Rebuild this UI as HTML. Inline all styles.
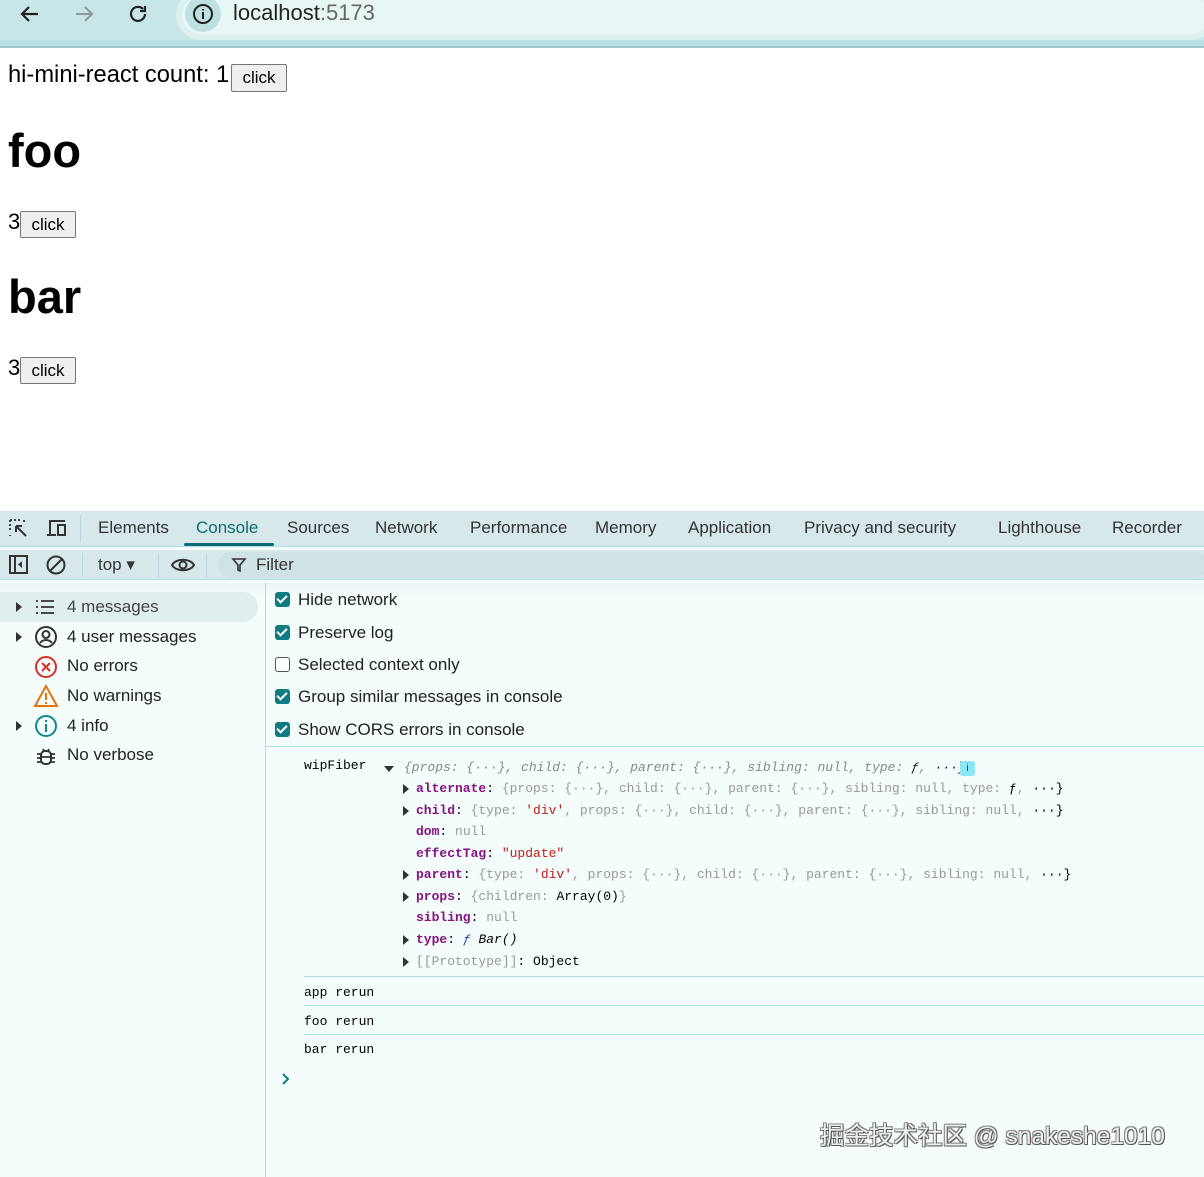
<!DOCTYPE html>
<html><head><meta charset="utf-8"><style>
*{margin:0;padding:0;box-sizing:border-box}
body{width:1204px;height:1177px;position:relative;overflow:hidden;background:#fff;font-family:"Liberation Sans",sans-serif;color:#000}
.a{position:absolute;white-space:nowrap}
.btn{position:absolute;background:#efefef;border:1px solid #767676;border-radius:2px;font-size:17px;text-align:center;line-height:26px}
.mono{font-family:"Liberation Mono",monospace;font-size:13px}
.k{color:#881280;font-weight:bold}
.g{color:#999}
.s{color:#c41a16}
.tab{position:absolute;top:518px;font-size:17px;color:#333}
.side{position:absolute;left:67px;font-size:17px;color:#222}
.cb{position:absolute;left:275px;width:15px;height:15px;border-radius:3px;background:#0f7c84}
.cb::after{content:"";position:absolute;left:4px;top:1px;width:4px;height:8px;border:solid #fff;border-width:0 2px 2px 0;transform:rotate(45deg)}
.cbl{position:absolute;left:298px;font-size:17px;color:#222}
.tri{position:absolute;width:0;height:0;border-top:5px solid transparent;border-bottom:5px solid transparent;border-left:6px solid #333}
</style></head><body>
<div class="a" style="left:0;top:0;width:1204px;height:40px;background:#c8e6e7"></div>
<div class="a" style="left:0;top:40px;width:1204px;height:8px;background:#b7e0e2;border-bottom:2px solid #9dc6c7"></div>
<div class="a" style="left:176px;top:-10px;width:1040px;height:50px;background:#e9f6f6;border-radius:25px;border:6px solid #dcf0f0"></div>
<div class="a" style="left:185px;top:-4px;width:36px;height:36px;border-radius:50%;background:#bfe0e1"></div>
<svg class="a" style="left:192px;top:3px" width="22" height="22" viewBox="0 0 22 22"><circle cx="11" cy="11" r="9" fill="none" stroke="#222" stroke-width="2"/><path d="M11 9v7M11 6v1.5" stroke="#222" stroke-width="2"/></svg>
<div class="a" style="left:233px;top:0;font-size:22px;color:#222">localhost<span style="color:#666">:5173</span></div>
<svg class="a" style="left:18px;top:2px" width="24" height="24" viewBox="0 0 24 24"><path d="M20 12H5M11 5l-7 7 7 7" fill="none" stroke="#222" stroke-width="2.2"/></svg>
<svg class="a" style="left:72px;top:2px" width="24" height="24" viewBox="0 0 24 24"><path d="M4 12h15M13 5l7 7-7 7" fill="none" stroke="#8a9a9a" stroke-width="2"/></svg>
<svg class="a" style="left:126px;top:2px" width="24" height="24" viewBox="0 0 24 24"><path d="M19 12a7 7 0 1 1-2-5" fill="none" stroke="#222" stroke-width="2.2"/><path d="M19 4v5h-5" fill="none" stroke="#222" stroke-width="2.2"/></svg>

<div class="a" style="left:8px;top:62px;font-size:23.7px">hi-mini-react count: 1</div>
<div class="btn" style="left:231px;top:64px;width:56px;height:28px">click</div>
<div class="a" style="left:8px;top:123px;font-size:47px;font-weight:bold">foo</div>
<div class="a" style="left:8px;top:209px;font-size:22px">3</div>
<div class="btn" style="left:20px;top:211px;width:56px;height:27px">click</div>
<div class="a" style="left:8px;top:269px;font-size:47px;font-weight:bold">bar</div>
<div class="a" style="left:8px;top:355px;font-size:22px">3</div>
<div class="btn" style="left:20px;top:357px;width:56px;height:27px">click</div>

<div class="a" style="left:0;top:511px;width:1204px;height:666px;background:#f4fcfc"></div>
<div class="a" style="left:0;top:511px;width:1204px;height:36px;background:#d7e8ea;border-bottom:1px solid #a9dfe6"></div>
<div class="a" style="left:0;top:550px;width:1204px;height:30px;background:#d7e8ea;border-bottom:1px solid #a9dfe6"></div>
<div class="a" style="left:0;top:583px;width:1204px;height:12px;background:linear-gradient(#e9f5f6,#f4fcfc)"></div>
<svg class="a" style="left:8px;top:518px" width="22" height="22" viewBox="0 0 22 22"><path d="M2 2h10M2 2v12M2 17v1M16 2v4" stroke="#333" stroke-width="1.8" stroke-dasharray="2 2" fill="none"/><path d="M8 8l10 10M8 8h6M8 8v6" stroke="#333" stroke-width="2" fill="none"/></svg>
<svg class="a" style="left:45px;top:518px" width="24" height="22" viewBox="0 0 24 22"><path d="M5 16V3h15M2 17h9" stroke="#333" stroke-width="2" fill="none"/><rect x="13" y="7" width="7" height="10" fill="none" stroke="#333" stroke-width="2"/></svg>
<div class="a" style="left:80px;top:515px;width:1px;height:28px;background:#b5d8dc"></div>
<div class="tab" style="left:98px">Elements</div>
<div class="tab" style="left:196px;color:#0e6b72">Console</div>
<div class="a" style="left:184px;top:543px;width:90px;height:3px;background:#0e6b72;border-radius:2px"></div>
<div class="tab" style="left:287px">Sources</div>
<div class="tab" style="left:375px">Network</div>
<div class="tab" style="left:470px">Performance</div>
<div class="tab" style="left:595px">Memory</div>
<div class="tab" style="left:688px">Application</div>
<div class="tab" style="left:804px">Privacy and security</div>
<div class="tab" style="left:998px">Lighthouse</div>
<div class="tab" style="left:1112px">Recorder</div>

<svg class="a" style="left:8px;top:555px" width="22" height="20" viewBox="0 0 22 20"><rect x="2" y="1" width="17" height="17" fill="none" stroke="#333" stroke-width="2"/><path d="M7 1v17" stroke="#333" stroke-width="2"/><path d="M14 6l-4 3.5 4 3.5z" fill="#333"/></svg>
<svg class="a" style="left:45px;top:554px" width="22" height="22" viewBox="0 0 22 22"><circle cx="11" cy="11" r="8.5" fill="none" stroke="#333" stroke-width="2"/><path d="M5 17L17 5" stroke="#333" stroke-width="2"/></svg>
<div class="a" style="left:82px;top:553px;width:1px;height:24px;background:#b5d8dc"></div>
<div class="a" style="left:98px;top:555px;font-size:17px;color:#333">top ▾</div>
<div class="a" style="left:158px;top:553px;width:1px;height:24px;background:#b5d8dc"></div>
<svg class="a" style="left:170px;top:555px" width="26" height="20" viewBox="0 0 26 20"><path d="M2 10C6 3 20 3 24 10 20 17 6 17 2 10z" fill="none" stroke="#333" stroke-width="2"/><circle cx="13" cy="10" r="3.5" fill="none" stroke="#333" stroke-width="2"/></svg>
<div class="a" style="left:206px;top:553px;width:1px;height:24px;background:#b5d8dc"></div>
<div class="a" style="left:218px;top:552px;width:990px;height:26px;border-radius:13px;background:#cfe2e4"></div>
<svg class="a" style="left:231px;top:557px" width="16" height="16" viewBox="0 0 16 16"><path d="M2 2h12l-5 6v6l-2-1V8z" fill="none" stroke="#333" stroke-width="1.6"/></svg>
<div class="a" style="left:256px;top:555px;font-size:17px;color:#333">Filter</div>

<div class="a" style="left:265px;top:583px;width:1px;height:594px;background:#a9dfe6"></div>
<div class="a" style="left:0;top:592px;width:258px;height:30px;background:#e1eef0;border-radius:0 15px 15px 0"></div>
<div class="tri" style="left:16px;top:602px"></div>
<div class="tri" style="left:16px;top:632px"></div>
<div class="tri" style="left:16px;top:721px"></div>
<svg class="a" style="left:34px;top:598px" width="22" height="18" viewBox="0 0 22 18"><path d="M2 3h2M7 3h13M2 9h2M7 9h13M2 15h2M7 15h13" stroke="#333" stroke-width="1.8"/></svg>
<svg class="a" style="left:34px;top:625px" width="24" height="24" viewBox="0 0 24 24"><circle cx="12" cy="12" r="10" fill="none" stroke="#333" stroke-width="2"/><circle cx="12" cy="9.5" r="3.5" fill="none" stroke="#333" stroke-width="2"/><path d="M6 18c3-4 9-4 12 0" fill="none" stroke="#333" stroke-width="2"/></svg>
<svg class="a" style="left:34px;top:655px" width="24" height="24" viewBox="0 0 24 24"><circle cx="12" cy="12" r="10" fill="none" stroke="#d93025" stroke-width="2"/><path d="M8 8l8 8M16 8l-8 8" stroke="#d93025" stroke-width="2"/></svg>
<svg class="a" style="left:33px;top:684px" width="26" height="24" viewBox="0 0 26 24"><path d="M13 2L2 22h22z" fill="none" stroke="#e8710a" stroke-width="2"/><path d="M13 9v7M13 18v2" stroke="#e8710a" stroke-width="2"/></svg>
<svg class="a" style="left:34px;top:714px" width="24" height="24" viewBox="0 0 24 24"><circle cx="12" cy="12" r="10" fill="none" stroke="#0d8a8f" stroke-width="2"/><path d="M12 10v8M12 6v2" stroke="#0d8a8f" stroke-width="2"/></svg>
<svg class="a" style="left:35px;top:745px" width="22" height="22" viewBox="0 0 22 22"><rect x="6" y="6" width="10" height="13" rx="4" fill="none" stroke="#333" stroke-width="2"/><path d="M8 4l1 2M14 4l-1 2M2 9h4M16 9h4M2 13h4M16 13h4M2 17h4M16 17h4M6 12h10" stroke="#333" stroke-width="1.8"/></svg>
<div class="side" style="top:597px;color:#444">4 messages</div>
<div class="side" style="top:627px">4 user messages</div>
<div class="side" style="top:656px">No errors</div>
<div class="side" style="top:686px">No warnings</div>
<div class="side" style="top:716px">4 info</div>
<div class="side" style="top:745px">No verbose</div>

<div class="cb" style="top:592px"></div><div class="cbl" style="top:590px">Hide network</div>
<div class="cb" style="top:625px"></div><div class="cbl" style="top:623px">Preserve log</div>
<div class="a" style="left:275px;top:657px;width:15px;height:15px;border-radius:3px;border:1.5px solid #555;background:#fff"></div><div class="cbl" style="top:655px">Selected context only</div>
<div class="cb" style="top:689px"></div><div class="cbl" style="top:687px">Group similar messages in console</div>
<div class="cb" style="top:722px"></div><div class="cbl" style="top:720px">Show CORS errors in console</div>
<div class="a" style="left:266px;top:746px;width:938px;height:1px;background:#a9dfe6"></div>

<div class="a mono" style="left:304px;top:758px">wipFiber</div>
<div class="a" style="left:384px;top:766px;border-left:5px solid transparent;border-right:5px solid transparent;border-top:6px solid #333"></div>
<div class="a mono" style="left:404px;top:760px;font-style:italic;color:#888">{props: {···}, child: {···}, parent: {···}, sibling: null, type: <span style="color:#222">ƒ</span>,  <span style="color:#222">···}</span></div>
<div class="a" style="left:960px;top:761px;width:15px;height:15px;background:#8de6f5;border-radius:3px;font-size:10px;text-align:center;color:#135;line-height:15px">i</div>
<div class="tri" style="left:403px;top:784px"></div>
<div class="a mono" style="left:416px;top:781px"><span class="k">alternate</span>: <span class="g">{props: {···}, child: {···}, parent: {···}, sibling: null, type: </span>ƒ<span class="g">,</span>  ···}</div>
<div class="tri" style="left:403px;top:806px"></div>
<div class="a mono" style="left:416px;top:803px"><span class="k">child</span>: <span class="g">{type: </span><span class="s">'div'</span><span class="g">, props: {···}, child: {···}, parent: {···}, sibling: null,</span>  ···}</div>
<div class="a mono" style="left:416px;top:824px"><span class="k">dom</span>: <span class="g">null</span></div>
<div class="a mono" style="left:416px;top:846px"><span class="k">effectTag</span>: <span class="s">"update"</span></div>
<div class="tri" style="left:403px;top:870px"></div>
<div class="a mono" style="left:416px;top:867px"><span class="k">parent</span>: <span class="g">{type: </span><span class="s">'div'</span><span class="g">, props: {···}, child: {···}, parent: {···}, sibling: null,</span>  ···}</div>
<div class="tri" style="left:403px;top:892px"></div>
<div class="a mono" style="left:416px;top:889px"><span class="k">props</span>: <span class="g">{children: </span>Array(0)<span class="g">}</span></div>
<div class="a mono" style="left:416px;top:910px"><span class="k">sibling</span>: <span class="g">null</span></div>
<div class="tri" style="left:403px;top:935px"></div>
<div class="a mono" style="left:416px;top:932px"><span class="k">type</span>: <i style="color:#1a4fa0">ƒ</i> <i>Bar()</i></div>
<div class="tri" style="left:403px;top:957px"></div>
<div class="a mono" style="left:416px;top:954px"><span class="g">[[Prototype]]</span>: Object</div>
<div class="a" style="left:304px;top:976px;width:900px;height:1px;background:#a9dfe6"></div>
<div class="a mono" style="left:304px;top:985px">app rerun</div>
<div class="a" style="left:304px;top:1005px;width:900px;height:1px;background:#a9dfe6"></div>
<div class="a mono" style="left:304px;top:1014px">foo rerun</div>
<div class="a" style="left:304px;top:1034px;width:900px;height:1px;background:#a9dfe6"></div>
<div class="a mono" style="left:304px;top:1042px">bar rerun</div>
<svg class="a" style="left:281px;top:1072px" width="10" height="14" viewBox="0 0 10 14"><path d="M2 2l5 5-5 5" fill="none" stroke="#0d7d86" stroke-width="2"/></svg>

<div class="a" style="left:820px;top:1117px;font-size:24.5px;color:#eee;font-family:'Liberation Sans','Noto Sans CJK SC',sans-serif;text-shadow:1px 1px 0 #555,-1px -1px 0 #888,1px -1px 0 #777,-1px 1px 0 #777">掘金技术社区 @ snakeshe1010</div>
</body></html>
